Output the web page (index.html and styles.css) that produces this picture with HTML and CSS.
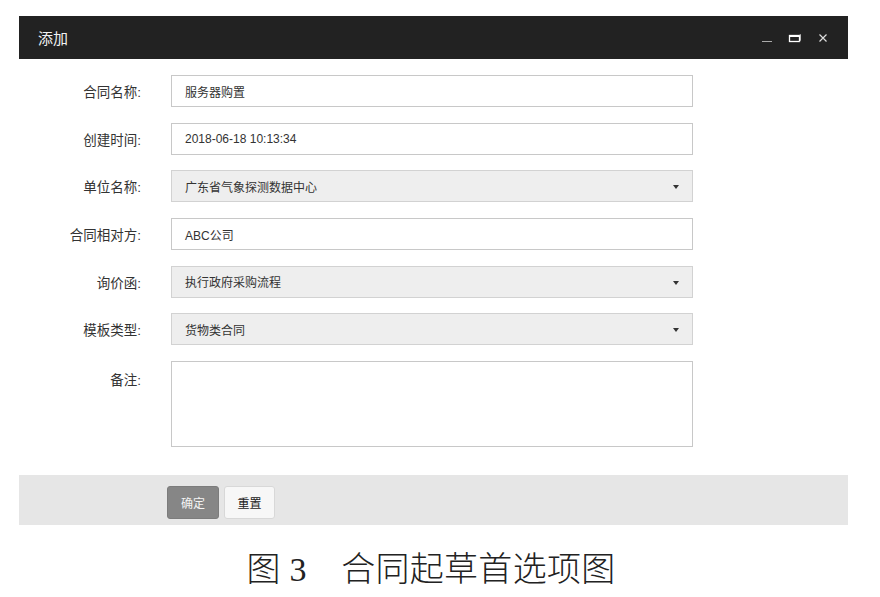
FILE: index.html
```html
<!DOCTYPE html>
<html lang="zh">
<head>
<meta charset="utf-8">
<title>添加</title>
<link rel="stylesheet" href="styles.css">
</head>
<body>
<div class="dialog">
  <div class="titlebar">
    <span class="title">添加</span>
    <div class="controls">
      <svg class="ic" width="14" height="14" viewBox="0 0 14 14"><line x1="2" y1="10.5" x2="12" y2="10.5" stroke="#aaa" stroke-width="1"/></svg>
      <svg class="ic" width="14" height="14" viewBox="0 0 14 14"><rect x="1.5" y="4.5" width="10" height="6" fill="none" stroke="#fff" stroke-width="1.3"/><line x1="1.5" y1="5" x2="11.5" y2="5" stroke="#fff" stroke-width="2"/><path d="M11.5 4 L12.5 3.5 L12.5 9.5 L11.5 10.5" fill="none" stroke="#bbb" stroke-width="1"/></svg>
      <svg class="ic" width="14" height="14" viewBox="0 0 14 14"><path d="M3.5 3.5 L10.5 10.5 M10.5 3.5 L3.5 10.5" stroke="#ddd" stroke-width="1.2"/></svg>
    </div>
  </div>
  <div class="form">
    <div class="row"><label class="lbl">合同名称:</label><div class="field">服务器购置</div></div>
    <div class="row"><label class="lbl">创建时间:</label><div class="field">2018-06-18 10:13:34</div></div>
    <div class="row"><label class="lbl">单位名称:</label><div class="field select">广东省气象探测数据中心<span class="caret"></span></div></div>
    <div class="row"><label class="lbl">合同相对方:</label><div class="field">ABC公司</div></div>
    <div class="row"><label class="lbl">询价函:</label><div class="field select">执行政府采购流程<span class="caret"></span></div></div>
    <div class="row"><label class="lbl">模板类型:</label><div class="field select">货物类合同<span class="caret"></span></div></div>
    <div class="row tall"><label class="lbl">备注:</label><div class="field area"></div></div>
  </div>
  <div class="footer">
    <button class="btn primary">确定</button>
    <button class="btn">重置</button>
  </div>
</div>
<div class="caption">图 3　合同起草首选项图</div>
</body>
</html>
```
FILE: styles.css
```css
* { box-sizing: border-box; }
html, body { margin: 0; padding: 0; background: #fff; }
body { font-family: "Liberation Sans", "Noto Sans CJK SC", sans-serif; color: #333; }
.dialog { margin: 16px 0 0 19px; width: 829px; }
.titlebar { height: 43px; background: #222222; display: flex; align-items: center; justify-content: space-between; padding: 0 18px 0 19px; }
.title { color: #f2f2f2; font-size: 15px; }
.controls { display: flex; gap: 14px; align-items: center; }
.ic { display: block; }
.form { padding-top: 16px; display: flex; flex-direction: column; gap: 15.7px; }
.row { display: flex; align-items: center; height: 32px; }
.row.tall { height: 86px; align-items: flex-start; }
.lbl { width: 122px; text-align: right; font-size: 13.5px; color: #333; flex: none; }
.row.tall .lbl { padding-top: 8px; }
.field { margin-left: 30px; width: 522px; height: 32px; border: 1px solid #c8c8c8; background: #fff; font-size: 12px; padding: 0 13px; display: flex; align-items: center; color: #333; position: relative; }
.field.select { background: #eeeeee; border-color: #d2d2d2; }
.caret { position: absolute; right: 13px; top: 14px; width: 0; height: 0; border-left: 3.5px solid transparent; border-right: 3.5px solid transparent; border-top: 4px solid #333; }
.field.area { height: 86px; }
.footer { margin-top: 28px; height: 50px; background: #e6e6e6; display: flex; align-items: center; gap: 5px; padding: 4px 0 0 148px; }
.btn { height: 33px; width: 51px; font-family: inherit; font-size: 12px; border-radius: 3px; border: 1px solid #d8d8d8; background: #f7f7f7; color: #222; padding: 0; }
.btn.primary { background: #868686; border-color: #7c7c7c; color: #f4f4f4; width: 52px; }
.caption { margin-top: 17px; text-align: center; font-family: "Liberation Serif", "Noto Sans CJK SC", serif; font-size: 34px; color: #222; font-weight: 300; letter-spacing: 0.3px; padding-right: 18px; }
```
